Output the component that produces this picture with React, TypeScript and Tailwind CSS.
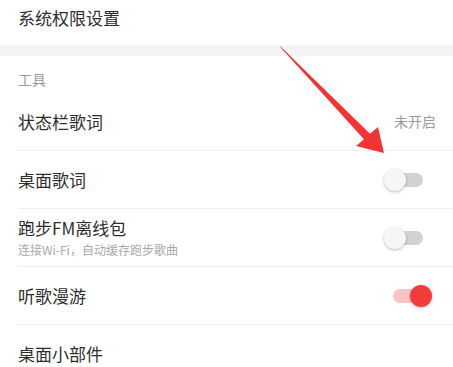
import React from "react";

function Toggle({ on }: { on: boolean }) {
  return (
    <div className="relative w-[48px] h-[24px] shrink-0">
      {on ? (
        <>
          <div className="absolute left-[9px] top-[5px] w-[32px] h-[14px] rounded-full bg-[#f9c3c3]" />
          <div className="absolute right-0 top-[1px] w-[22px] h-[22px] rounded-full bg-[#f23c3c] shadow-[0_1px_3px_rgba(0,0,0,0.25)]" />
        </>
      ) : (
        <>
          <div className="absolute left-[4px] top-[5px] w-[35px] h-[14px] rounded-full bg-[#d2d2d2]" />
          <div className="absolute left-0 top-[1px] w-[22px] h-[22px] rounded-full bg-[#f6f6f6] shadow-[0_1px_3px_rgba(0,0,0,0.28)]" />
        </>
      )}
    </div>
  );
}

function Row({
  title,
  sub,
  right,
  divider = true,
}: {
  title: string;
  sub?: string;
  right?: React.ReactNode;
  divider?: boolean;
}) {
  return (
    <div className="pl-[18px]">
      <div
        className={
          "h-[58px] flex items-center pr-[21px] " +
          (divider ? "border-b border-[#efefef]" : "")
        }
      >
        <div className="flex-1 flex flex-col">
          <span className="text-[17px] leading-[22px] text-[#2e2e2e]">{title}</span>
          {sub && (
            <span className="text-[12px] leading-[16px] text-[#a8a8a8] mt-[3px]">{sub}</span>
          )}
        </div>
        {right}
      </div>
    </div>
  );
}

export default function App() {
  return (
    <div
      className="relative w-[453px] h-[367px] overflow-hidden bg-white"
      style={{ fontFamily: '"Noto Sans CJK SC", "Noto Sans", sans-serif' }}
    >
      <div className="h-[45px] pl-[18px] pt-[6px]">
        <span className="text-[17px] leading-[22px] text-[#2e2e2e]">系统权限设置</span>
      </div>
      <div className="h-[11px] bg-[#f4f4f4]" />
      <div className="h-[37px] pl-[18px] pt-[10px]">
        <span className="text-[14px] leading-[18px] text-[#9a9a9a]">工具</span>
      </div>
      <Row
        title="状态栏歌词"
        right={<span className="text-[14px] text-[#9a9a9a] mr-[-4px]">未开启</span>}
      />
      <Row title="桌面歌词" right={<Toggle on={false} />} />
      <Row
        title="跑步FM离线包"
        sub="连接Wi-Fi，自动缓存跑步歌曲"
        right={<Toggle on={false} />}
      />
      <Row title="听歌漫游" right={<Toggle on={true} />} />
      <Row title="桌面小部件" divider={false} />

      <svg
        className="absolute left-0 top-0 pointer-events-none"
        width="453"
        height="367"
        viewBox="0 0 453 367"
      >
        <polygon
          points="280,46 370,133.7 378,127 384,153 356,146 364,139.3 281,48"
          fill="#f23434"
        />
      </svg>
    </div>
  );
}
